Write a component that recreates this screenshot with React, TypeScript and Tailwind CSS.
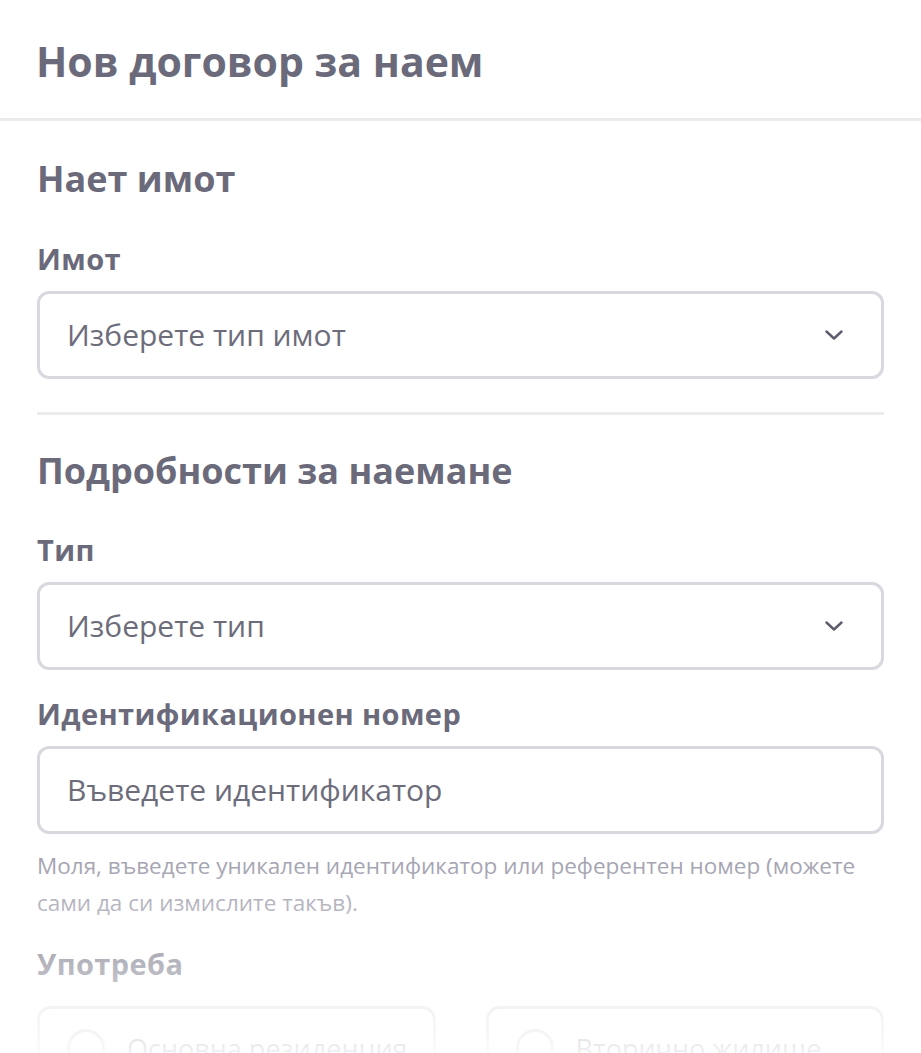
import React from 'react'

function Chevron() {
  return (
    <svg width="18" height="10" viewBox="0 0 18 10" fill="none" className="shrink-0">
      <polyline points="1.5,1.5 9,8.5 16.5,1.5" stroke="#5d5c6c" strokeWidth="2.4" strokeLinecap="round" strokeLinejoin="round" />
    </svg>
  )
}

function SelectBox({ placeholder }: { placeholder: string }) {
  return (
    <div className="mt-[14px] flex h-[88px] items-center justify-between rounded-[12px] border-[3px] border-[#d9d8de] pl-[27px] pr-[38px]">
      <span className="text-[30px] leading-[40px] text-[#6d6c7b]">{placeholder}</span>
      <Chevron />
    </div>
  )
}

function Label({ children, className = '' }: { children: React.ReactNode; className?: string }) {
  return <div className={`text-[29px] font-bold leading-[36px] tracking-[0.4px] ${className}`}>{children}</div>
}

function RadioCard({ label }: { label: string }) {
  return (
    <div className="flex h-[110px] items-start gap-[22px] overflow-hidden rounded-[14px] border-[3px] border-[#d9d8de] px-[27px] pt-[20px]">
      <div className="h-[38px] w-[38px] shrink-0 rounded-full border-[3px] border-[#c9c8cf]" />
      <span className="whitespace-nowrap text-[27px] leading-[40px] text-[#6d6c7b]">{label}</span>
    </div>
  )
}

export default function App() {
  return (
    <div className="relative h-[1053px] overflow-hidden bg-white font-['Open_Sans',sans-serif] text-[#6b6a7b]">
      <header className="border-b-[3px] border-[#ebebeb] px-[36px] pb-[27px] pt-[31px]">
        <h1 className="text-[41px] font-bold leading-[60px]">Нов договор за наем</h1>
      </header>

      <main className="px-[37px] pt-[35px]">
        {/* Нает имот */}
        <h2 className="text-[36px] font-bold leading-[46px]">Нает имот</h2>
        <Label className="mt-[39px]">Имот</Label>
        <SelectBox placeholder="Изберете тип имот" />

        <div className="mt-[33px] h-[3px] bg-[#ebebeb]" />

        {/* Подробности */}
        <h2 className="mt-[33px] text-[36px] font-bold leading-[46px]">Подробности за наемане</h2>
        <Label className="mt-[38px]">Тип</Label>
        <SelectBox placeholder="Изберете тип" />

        <Label className="mt-[26px]">Идентификационен номер</Label>
        <div className="mt-[14px] flex h-[88px] items-center rounded-[12px] border-[3px] border-[#d9d8de] pl-[27px]">
          <span className="text-[30px] leading-[40px] text-[#6d6c7b]">Въведете идентификатор</span>
        </div>
        <p className="mt-[13px] text-[22.5px] leading-[37px] text-[#9f9ead]">
          Моля, въведете уникален идентификатор или референтен номер (можете сами да си измислите такъв).
        </p>

        <Label className="mt-[25px]">Употреба</Label>
        <div className="mt-[24px] grid grid-cols-2 gap-[50px]">
          <RadioCard label="Основна резиденция" />
          <RadioCard label="Вторично жилище" />
        </div>
      </main>

      {/* fade out toward the bottom */}
      <div className="pointer-events-none absolute inset-x-0 bottom-0 h-[203px] bg-linear-to-b from-white/0 to-white/90" />
    </div>
  )
}
